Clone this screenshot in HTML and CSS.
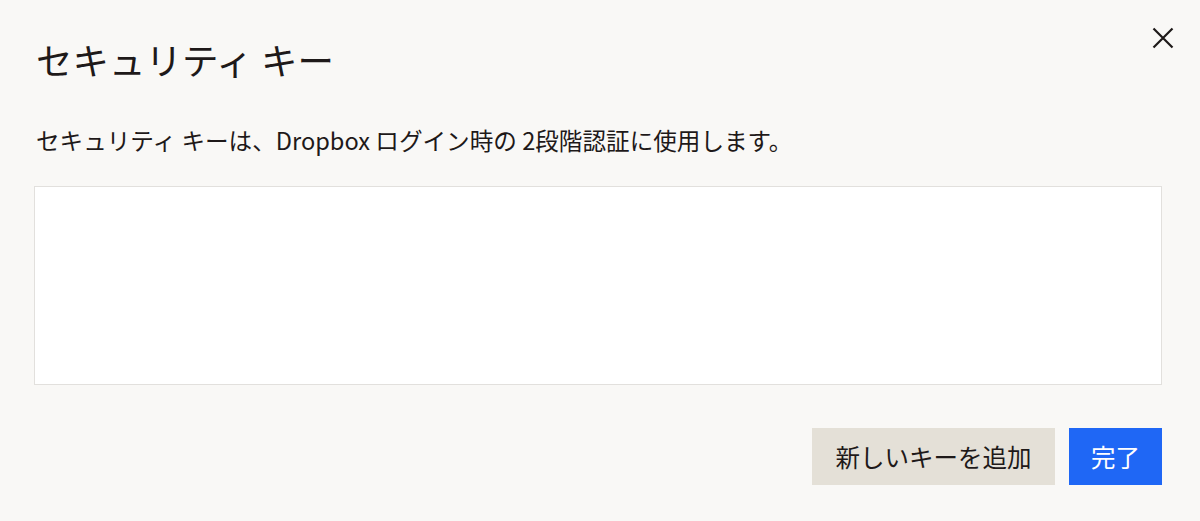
FILE: index.html
```html
<!DOCTYPE html>
<html lang="ja">
<head>
<meta charset="utf-8">
<link rel="stylesheet" href="styles.css">
</head>
<body>
<div class="modal">
  <div class="header">
    <h1 class="title">セキュリティ キー</h1>
    <button class="close" aria-label="閉じる">
      <svg width="22" height="22" viewBox="0 0 22 22"><path d="M1.5 1.5 L20.5 20.5 M20.5 1.5 L1.5 20.5" stroke="#1e1919" stroke-width="2.2" fill="none"/></svg>
    </button>
  </div>
  <p class="desc">セキュリティ キーは、Dropbox ログイン時の 2段階認証に使用します。</p>
  <div class="list"></div>
  <div class="actions">
    <button class="btn btn-secondary">新しいキーを追加</button>
    <button class="btn btn-primary">完了</button>
  </div>
</div>
</body>
</html>
```

FILE: styles.css
```css
html, body {
  margin: 0;
  padding: 0;
  background: #f9f8f6;
  width: 1200px;
  height: 521px;
  overflow: hidden;
}
.modal {
  font-family: "Noto Sans CJK JP", "Noto Sans", sans-serif;
  color: #1e1919;
  padding: 24px 38px 0 34px;
  display: flex;
  flex-direction: column;
}
.header {
  display: flex;
  justify-content: space-between;
  align-items: flex-start;
}
.title {
  margin: 10px 0 0 2px;
  font-size: 36.5px;
  font-weight: 400;
  line-height: 52px;
}
.close {
  background: none;
  border: 0;
  padding: 0;
  margin: 2px -13px 0 0;
  width: 24px;
  height: 24px;
  display: flex;
  align-items: center;
  justify-content: center;
}
.desc {
  margin: 38px 0 0 2px;
  font-size: 23.6px;
  line-height: 32px;
}
.list {
  margin-top: 30px;
  height: 197px;
  background: #fff;
  border: 1px solid #e2e0dd;
}
.actions {
  margin-top: 43px;
  display: flex;
  justify-content: flex-end;
  gap: 14px;
}
.btn {
  font-family: "Noto Sans CJK JP", "Noto Sans", sans-serif;
  font-size: 24.5px;
  height: 57px;
  border: 0;
  padding: 0;
  line-height: 57px;
}
.btn-secondary {
  background: #e4e0d7;
  color: #1e1919;
  width: 243px;
}
.btn-primary {
  background: #1f67f5;
  color: #fff;
  width: 93px;
}
```
